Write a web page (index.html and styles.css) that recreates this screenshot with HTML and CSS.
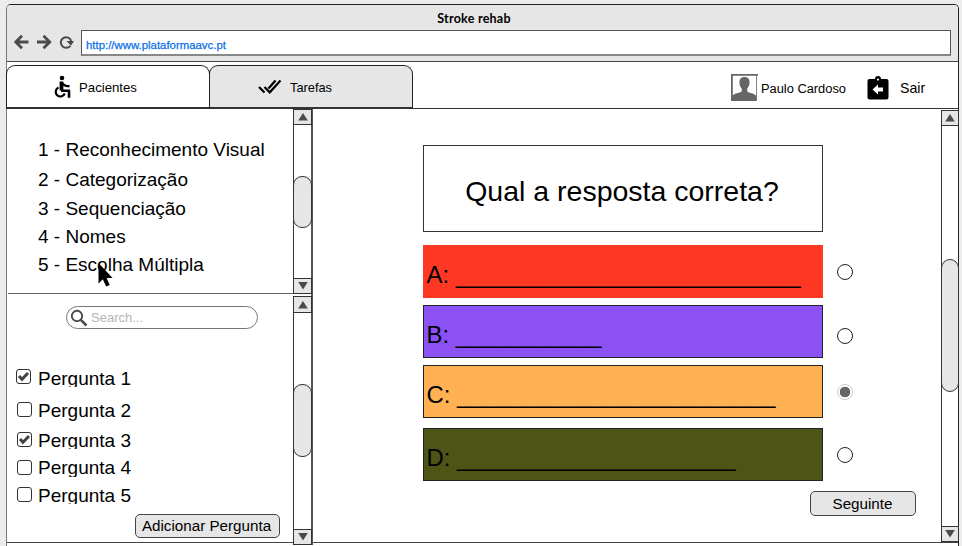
FILE: index.html
```
<!DOCTYPE html>
<html lang="pt">
<head>
<meta charset="utf-8">
<title>Stroke rehab</title>
<link rel="stylesheet" href="styles.css">
</head>
<body>
<div class="window">
  <header class="chrome">
    <div class="title">Stroke rehab</div>
    <div class="toolbar">
      <svg class="nav" width="62" height="18" viewBox="0 0 62 18" fill="none" stroke="#4a4a4a" stroke-width="2.800">
        <path d="M15.500 9H3M9 2.800L2.800 9 9 15.200"/>
        <path d="M24 9h12.500M30.500 2.800L36.700 9l-6.200 6.200"/>
        <path stroke-width="2" d="M57.300 12.800a5.300 5.300 0 1 1 .900-4.800"/>
        <path fill="#4a4a4a" stroke="none" d="M53.500 8h7.500l-3 4.800z"/>
      </svg>
      <div class="address">http://www.plataformaavc.pt</div>
    </div>
  </header>

  <nav class="tabs">
    <div class="tab tab-active">
      <svg class="icon-patient" width="20" height="24" viewBox="0 0 20 24" fill="none" stroke="#000">
        <circle cx="9" cy="3" r="2.300" fill="#000" stroke="none"/>
        <path stroke-width="3.800" stroke-linejoin="round" d="M8.500 6.500v9"/>
        <path stroke-width="2.300" d="M9 8.200c1.600 2 4 3 7.500 3"/>
        <path stroke-width="2.600" stroke-linejoin="round" d="M8 15.800h8v6.900"/>
        <path stroke-width="2.200" d="M5.500 12.500a4.700 4.700 0 1 0 6.300 6"/>
      </svg>
      <span>Pacientes</span>
    </div>
    <div class="tab tab-tasks">
      <svg class="icon-tasks" width="24" height="15" viewBox="0 0 24 15" fill="none" stroke="#000" stroke-width="2.200">
        <path d="M1 8l5.500 5.500M6.500 8l5.300 5.300L22.500 1.500M10.500 9.500l7-8"/>
      </svg>
      <span>Tarefas</span>
    </div>
    <div class="account">
      <svg class="avatar" width="27" height="27" viewBox="0 0 27 27">
        <path fill="#666" d="M0 0h27v1.800H0zM0 0h1.800v27H0zM25.200 0H26v27h-.8z"/>
        <path fill="#666" d="M13.500 3c3.800 0 5.200 2.500 5 5.800 0 3-1.200 4.500-2.300 5.600v3c2 1.500 7.500 1.800 9.200 4.600V27H1v-5c1.700-2.800 7.600-3.100 9.700-4.600v-3C9.600 13.300 8.500 11.800 8.500 8.800 8.300 5.500 9.700 3 13.500 3z"/>
      </svg>
      <span class="user">Paulo Cardoso</span>
      <svg class="icon-exit" width="22" height="24" viewBox="0 0 22 24">
        <path d="M2.500 3H8a3 3 0 0 1 6 0h5.500A2 2 0 0 1 21.500 5v16.500a2 2 0 0 1-2 2h-17a2 2 0 0 1-2-2V5a2 2 0 0 1 2-2z"/>
        <circle cx="11" cy="3.600" r="1.100" fill="#fff"/>
        <path fill="#fff" d="M5.500 13.500l5.500-5v3h5v4h-5v3z"/>
      </svg>
      <span class="exit">Sair</span>
    </div>
  </nav>

  <div class="content">
    <aside class="sidebar">
      <section class="topics">
        <ul class="topic-list">
          <li>1 - Reconhecimento Visual</li>
          <li>2 - Categorização</li>
          <li>3 - Sequenciação</li>
          <li>4 - Nomes</li>
          <li class="topic-current">5 - Escolha Múltipla
            <svg class="cursor" width="16" height="24" viewBox="0 0 16 24"><path d="M.5 0v20.500l4.300-4.200 3.400 7.200 3.600-1.500-3.200-7.100h6z"/></svg>
          </li>
        </ul>
        <div class="scroll scroll-topics">
          <div class="scroll-btn"><svg width="10" height="8"><path d="M5 0l4.800 7.500H.2z"/></svg></div>
          <div class="thumb"></div>
          <div class="scroll-btn scroll-end"><svg width="10" height="8"><path d="M5 7.500L9.800 0H.2z"/></svg></div>
        </div>
      </section>
      <section class="questions">
        <div class="question-pane">
          <div class="search">
            <svg width="18" height="18" viewBox="0 0 18 18" fill="none" stroke="#4a4a4a"><circle cx="7" cy="7" r="5.200" stroke-width="1.900"/><path stroke-width="2.600" d="M10.800 10.800l5.700 5.700"/></svg>
            <span>Search...</span>
          </div>
          <div class="check-list">
            <div class="check q1"><i class="box"><svg width="13" height="13"><path d="M2 6l3 3.300 6-6.300"/></svg></i><span>Pergunta 1</span></div>
            <div class="check q2"><i class="box"></i><span>Pergunta 2</span></div>
            <div class="check q3"><i class="box"><svg width="13" height="13"><path d="M2 6l3 3.300 6-6.300"/></svg></i><span>Pergunta 3</span></div>
            <div class="check q4"><i class="box"></i><span>Pergunta 4</span></div>
            <div class="check q5"><i class="box"></i><span>Pergunta 5</span></div>
          </div>
          <div class="button add">Adicionar Pergunta</div>
        </div>
        <div class="scroll scroll-questions">
          <div class="scroll-btn"><svg width="10" height="8"><path d="M5 0l4.800 7.500H.2z"/></svg></div>
          <div class="thumb"></div>
          <div class="scroll-btn scroll-end"><svg width="10" height="8"><path d="M5 7.500L9.800 0H.2z"/></svg></div>
        </div>
      </section>
    </aside>

    <main class="quiz">
      <div class="quiz-body">
        <div class="prompt">Qual a resposta correta?</div>
        <div class="row row-a"><div class="answer red">A: __________________________</div><i class="radio"></i></div>
        <div class="row row-b"><div class="answer purple">B: ___________</div><i class="radio"></i></div>
        <div class="row row-c"><div class="answer orange">C: ________________________</div><i class="radio selected"></i></div>
        <div class="row row-d"><div class="answer olive">D: _____________________</div><i class="radio"></i></div>
        <div class="button next">Seguinte</div>
      </div>
      <div class="scroll scroll-main">
        <div class="scroll-btn"><svg width="10" height="8"><path d="M5 0l4.800 7.500H.2z"/></svg></div>
        <div class="thumb"></div>
        <div class="scroll-btn scroll-end"><svg width="10" height="8"><path d="M5 7.500L9.800 0H.2z"/></svg></div>
      </div>
    </main>
  </div>
</div>
</body>
</html>
```
FILE: styles.css
```
* { box-sizing: border-box; }

body {
  margin: 0;
  height: 546px;
  overflow: hidden;
  padding: 4px 3px 0 6px;
  background: #ececec;
  font-family: "Liberation Sans", Arial, sans-serif;
  color: #000;
  white-space: nowrap;
}

svg { display: block; flex: none; }

.window {
  width: 953px;
  height: 542px;
  border: 1px solid #222;
  border-left-color: #777;
  border-bottom: 0;
  border-radius: 5px 5px 0 0;
  background: #fff;
}

/* Browser chrome */
.chrome {
  height: 57px;
  background: #e6e6e6;
  border-bottom: 1px solid #444;
  border-radius: 4px 4px 0 0;
}

.title {
  height: 25px;
  padding-right: 17px;
  font: bold 12.5px/27px Lato, sans-serif;
  letter-spacing: .25px;
  text-align: center;
}

.toolbar { display: flex; padding-left: 6px; }
.nav { margin: 3px 6px 0 0; }

.address {
  width: 870px;
  height: 26px;
  padding-left: 4px;
  border: 1px solid #555;
  border-bottom: 2px solid #888;
  background: #fff;
  color: #0a70e8;
  font-size: 11.4px;
  line-height: 28px;
  -webkit-text-stroke: .25px #0a70e8;
}

/* Tabs */
.tabs {
  display: flex;
  height: 47px;
  padding-top: 3px;
  border-bottom: 1px solid #333;
}

.tab {
  display: flex;
  height: 44px;
  border: 1px solid #222;
  border-bottom: 2px solid #333;
  border-radius: 9px 9px 0 0;
  font-size: 13.2px;
  line-height: 43px;
}

.tab-active { width: 204px; margin-left: -1px; padding-left: 46px; }
.tab-tasks { width: 204px; margin-left: -1px; padding-left: 48px; background: #e6e6e6; font-size: 12.8px; }
.icon-patient { margin: 9px 6px 0 0; }
.icon-tasks { margin: 13px 8px 0 0; }
.account { display: flex; flex: 1; padding-left: 318px; line-height: 48px; }
.avatar { margin-top: 9px; }
.user { width: 102px; margin-left: 3px; font-size: 12.85px; }
.icon-exit { margin: 11px 0 0 4px; }
.exit { margin-left: 11px; font-size: 14.2px; line-height: 46px; }

/* Two-column content */
.content {
  display: grid;
  grid-template-columns: 306px 645px;
  height: 434px;
  border-bottom: 1px solid #444;
}

.sidebar { border-right: 2px solid #555; }

.topics {
  display: grid;
  grid-template-columns: 286px 18px;
  height: 185px;
  background: linear-gradient(#666, #666) 1px 100% / 100% 1px no-repeat;
}

.topic-list { margin: 0; padding: 30px 0 0 31px; list-style: none; font-size: 19px; line-height: 22px; }
.topic-list li { height: 28px; }
.topic-list li:nth-child(1) { height: 30px; }
.topic-list li:nth-child(2) { height: 29px; }
.topic-current { position: relative; }
.cursor { position: absolute; left: 60px; top: 9px; }

.scroll {
  display: flex;
  flex-direction: column;
  width: 18px;
  border-left: 1px solid #333;
}

.scroll-btn {
  display: flex;
  flex: none;
  align-items: center;
  justify-content: center;
  width: 19px;
  height: 16px;
  margin-left: -1px;
  border: 1px solid #333;
  background: #e6e6e6;
}

.scroll-btn path { fill: #4a4a4a; }
.scroll-end { margin-top: auto; }

.thumb {
  flex: none;
  width: 19px;
  margin-left: -1px;
  border: 1px solid #333;
  border-radius: 9px;
  background: #e6e6e6;
}

.scroll-topics .thumb { height: 52px; margin-top: 51px; }
.scroll-questions { height: 249px; }
.scroll-questions .scroll-btn:first-child { height: 17px; }
.scroll-questions .thumb { height: 73px; margin-top: 71px; }
.scroll-main .thumb { height: 133px; margin-top: 133px; }

/* Question list */
.questions { display: grid; grid-template-columns: 286px 18px; padding-top: 2px; }
.question-pane { padding-top: 10px; }

.search {
  display: flex;
  width: 192px;
  height: 23px;
  margin-left: 59px;
  padding-left: 2px;
  border: 1px solid #777;
  border-radius: 12px;
  color: #b5b5b5;
  font-size: 13px;
  line-height: 21px;
}

.search svg { margin: 2px 3px 0 1px; }
.check-list { padding: 39px 0 0 9px; }
.check { display: flex; overflow: hidden; font-size: 19px; line-height: 22px; }
.check span { width: 110px; }

.box {
  flex: none;
  width: 15px;
  height: 15px;
  margin: 1px 7px 0 0;
  border: 1px solid #333;
  border-radius: 3px;
}

.box path { fill: none; stroke: #444; stroke-width: 3; }
.q1 { height: 19px; margin-bottom: 13px; }
.q2 { height: 22px; margin-bottom: 8px; }
.q3 { height: 19px; margin-bottom: 8px; }
.q4 { height: 20px; margin-bottom: 8px; }
.q5 { height: 19px; }
.q2 .box, .q3 .box, .q4 .box { margin: 2px 6px 0 1px; }
.q4 .box { margin-top: 3px; }
.q5 .box { margin: 2px 6px 0 1px; }

.button {
  border: 1px solid #444;
  border-radius: 5px;
  background: #e6e6e6;
  font-size: 15.2px;
  text-align: center;
}

.add { width: 145px; height: 24px; margin: 10px 0 0 128px; padding-right: 2px; line-height: 22px; }

/* Quiz */
.quiz { display: grid; grid-template-columns: 628px 17px; }
.quiz-body { padding: 36px 0 0 110px; }

.prompt {
  width: 400px;
  height: 87px;
  margin-bottom: 13px;
  padding-right: 2px;
  border: 1px solid #333;
  font-size: 28.5px;
  line-height: 91px;
  text-align: center;
}

.row { display: flex; align-items: center; gap: 14px; height: 54px; margin-bottom: 6px; }
.row-c { margin-bottom: 9px; }
.row-d { margin-bottom: 9px; }

.answer {
  width: 400px;
  height: 53px;
  margin-bottom: 1px;
  padding-left: 2.5px;
  border: 1px solid #222;
  font-size: 23.86px;
  line-height: 58px;
}

.red { background: #ff3824; border-color: #ff3824; }
.purple { background: #8b51f5; }
.orange { background: #ffb154; }
.olive { background: #4e5416; }

.radio { width: 16px; height: 16px; border: 1px solid #222; border-radius: 50%; }
.row-b .radio { margin-top: 8px; }
.selected { border-color: #ccc; background: radial-gradient(circle, #666 5px, #fff 5.6px); }

.next { width: 106px; height: 25px; margin-left: 387px; padding-right: 1px; line-height: 23px; }
.scroll-main { width: 18px; height: 432px; margin-top: 1px; }
.scroll-main .scroll-btn, .scroll-main .thumb { width: 18px; }
```
